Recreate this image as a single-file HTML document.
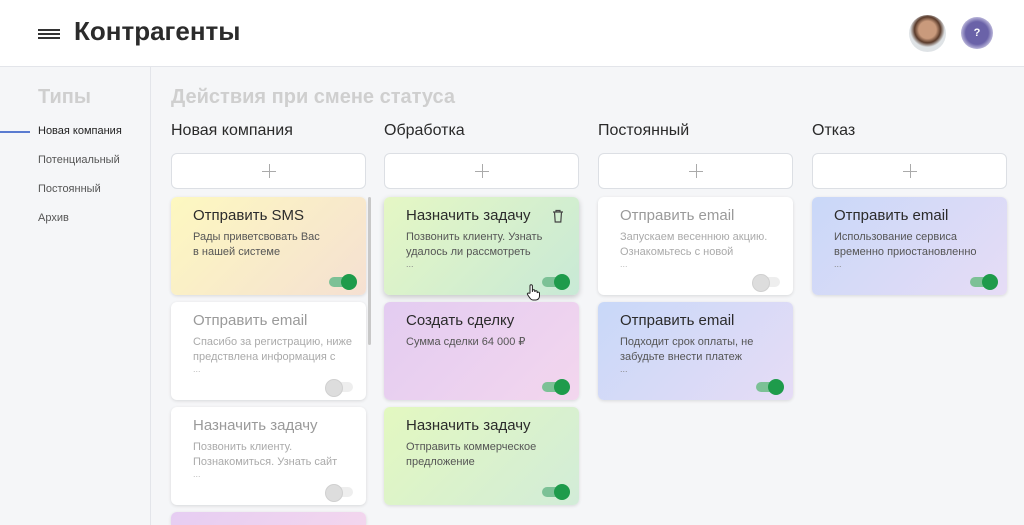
<!DOCTYPE html>
<html style="width:1024px;height:525px;overflow:hidden"><head><meta charset="utf-8"><style>
*{margin:0;padding:0;box-sizing:border-box}
body{width:1024px;height:525px;overflow:hidden;background:#f5f6f8;font-family:"Liberation Sans","DejaVu Sans",sans-serif;position:relative}
.hdr{position:absolute;left:0;top:0;width:1024px;height:67px;background:#fff;border-bottom:1px solid #e3e5ea}
.side{position:absolute;left:0;top:67px;width:151px;height:458px;border-right:1px solid #e3e5ea}
.abs{position:absolute}
.si{position:absolute;left:38px;font-size:11px;color:#555}
.ct{position:absolute;top:122px;font-size:16px;color:#2a2a2a}
.plus{position:absolute;top:153px;width:195px;height:36px;background:#fff;border:1px solid #dcdfe4;border-radius:6px}
.plus:before{content:"";position:absolute;left:90px;top:17px;width:14px;height:1px;background:#aaa}
.plus:after{content:"";position:absolute;left:97px;top:10px;width:1px;height:14px;background:#aaa}
.card{position:absolute;width:195px;height:98px;border-radius:6px;box-shadow:0 1px 3px rgba(0,0,0,.12);overflow:hidden}
.card .t{position:absolute;left:22px;top:10px;font-size:15px;color:#2b2b2b}
.card .d{position:absolute;left:22px;top:33px;font-size:11px;line-height:15px;color:#555;width:160px}
.card .e{position:absolute;left:22px;top:62px;font-size:9px;color:#888}
.w{background:#fff}
.w .t{color:#9a9a9a}.w .d{color:#aaa}.w .e{color:#bbb}
.tg{position:absolute;left:158px;top:80px;width:24px;height:10px;border-radius:5px;background:#7cc196}
.tg:after{content:"";position:absolute;right:-4px;top:-3px;width:16px;height:16px;border-radius:50%;background:#1e9b4b}
.off{background:#eee}
.off:after{left:-4px;right:auto;background:#ddd;border:1px solid #d0d0d0}
</style></head><body>
<div class="hdr">
 <div class="abs" style="left:38px;top:29px;width:22px;height:2px;background:#333"></div>
 <div class="abs" style="left:38px;top:33px;width:22px;height:2px;background:#333"></div>
 <div class="abs" style="left:38px;top:37px;width:22px;height:2px;background:#333"></div>
 <div class="abs" style="left:74px;top:16px;font-size:26px;font-weight:bold;color:#2b2b2b">Контрагенты</div>
 <div class="abs" style="left:909px;top:15px;width:37px;height:37px;border-radius:50%;background:radial-gradient(circle at 50% 40%,#c99a7c 0 30%,#5a3b2b 45%,#dfe3e6 60%)"></div>
 <div class="abs" style="left:961px;top:17px;width:32px;height:32px;border-radius:50%;background:radial-gradient(circle,#6a62a8 0 50%,#b7b3d8 70%,#e8e7f3 100%);color:#fff;font-size:11px;font-weight:bold;text-align:center;line-height:32px">?</div>
</div>
<div class="side">
 <div class="abs" style="left:38px;top:19px;font-size:20px;font-weight:bold;color:#cfcfcf">Типы</div>
 <div class="abs" style="left:0;top:64px;width:30px;height:2px;background:#5a7bd0"></div>
</div>
<div class="si" style="top:125px;color:#222">Новая компания</div>
<div class="si" style="top:154px">Потенциальный</div>
<div class="si" style="top:183px">Постоянный</div>
<div class="si" style="top:212px">Архив</div>
<div class="abs" style="left:171px;top:86px;font-size:20px;font-weight:bold;color:#cfcfcf">Действия при смене статуса</div>

<div class="ct" style="left:171px">Новая компания</div>
<div class="ct" style="left:384px">Обработка</div>
<div class="ct" style="left:598px">Постоянный</div>
<div class="ct" style="left:812px">Отказ</div>
<div class="plus" style="left:171px"></div>
<div class="plus" style="left:384px"></div>
<div class="plus" style="left:598px"></div>
<div class="plus" style="left:812px"></div>

<div class="card" style="left:171px;top:197px;background:linear-gradient(135deg,#fdf8c0,#f5e0d2)"><div class="t">Отправить SMS</div><div class="d">Рады приветсвовать Вас<br>в нашей системе</div><div class="tg"></div></div>
<div class="card w" style="left:171px;top:302px"><div class="t">Отправить email</div><div class="d">Спасибо за регистрацию, ниже предствлена информация с</div><div class="e">...</div><div class="tg off"></div></div>
<div class="card w" style="left:171px;top:407px"><div class="t">Назначить задачу</div><div class="d">Позвонить клиенту. Познакомиться. Узнать сайт</div><div class="e">...</div><div class="tg off"></div></div>
<div class="card" style="left:171px;top:512px;height:13px;border-radius:6px 6px 0 0;background:linear-gradient(135deg,#e6cdf2,#f3d6ee)"></div>
<div class="abs" style="left:368px;top:197px;width:3px;height:148px;background:#c8c8c8;border-radius:2px"></div>

<div class="card" style="left:384px;top:197px;background:linear-gradient(135deg,#e5f7c4,#c8e9d6);box-shadow:0 2px 6px rgba(0,0,0,.2)"><div class="t">Назначить задачу</div><div class="d">Позвонить клиенту. Узнать удалось ли рассмотреть</div><div class="e">...</div><div class="tg"></div>
<svg class="abs" style="left:168px;top:12px" width="12" height="14" viewBox="0 0 12 14"><path d="M1 3h10M4 3V1.5h4V3M2.5 3l.7 10h5.6l.7-10" fill="none" stroke="#444" stroke-width="1.2"/></svg></div>
<svg class="abs" style="left:526px;top:284px" width="14" height="17" viewBox="0 0 14 17"><path d="M4 9V2a1.2 1.2 0 0 1 2.4 0v6V7a1.2 1.2 0 0 1 2.4 0v1a1.2 1.2 0 0 1 2.4 0v1a1.2 1.2 0 0 1 2.3 0v3c0 2-1.5 4-3.5 4H7c-1.5 0-2.5-1-3.5-2.5L1.5 10.5c-.6-1 .6-2 1.5-1.2z" fill="#fff" stroke="#222" stroke-width="1"/></svg>
<div class="card" style="left:384px;top:302px;background:linear-gradient(135deg,#e3ccf1,#f3d6ee)"><div class="t">Создать сделку</div><div class="d">Сумма сделки 64 000 ₽</div><div class="tg"></div></div>
<div class="card" style="left:384px;top:407px;background:linear-gradient(135deg,#e3f8c0,#d2ecd8)"><div class="t">Назначить задачу</div><div class="d">Отправить коммерческое предложение</div><div class="tg"></div></div>

<div class="card w" style="left:598px;top:197px"><div class="t">Отправить email</div><div class="d">Запускаем весеннюю акцию. Ознакомьтесь с новой</div><div class="e">...</div><div class="tg off"></div></div>
<div class="card" style="left:598px;top:302px;background:linear-gradient(135deg,#c8d8f8,#e6dcf6)"><div class="t">Отправить email</div><div class="d">Подходит срок оплаты, не забудьте внести платеж</div><div class="e">...</div><div class="tg"></div></div>

<div class="card" style="left:812px;top:197px;background:linear-gradient(135deg,#c9d8f8,#e6dcf6)"><div class="t">Отправить email</div><div class="d">Использование сервиса временно приостановленно</div><div class="e">...</div><div class="tg"></div></div>
</body></html>
